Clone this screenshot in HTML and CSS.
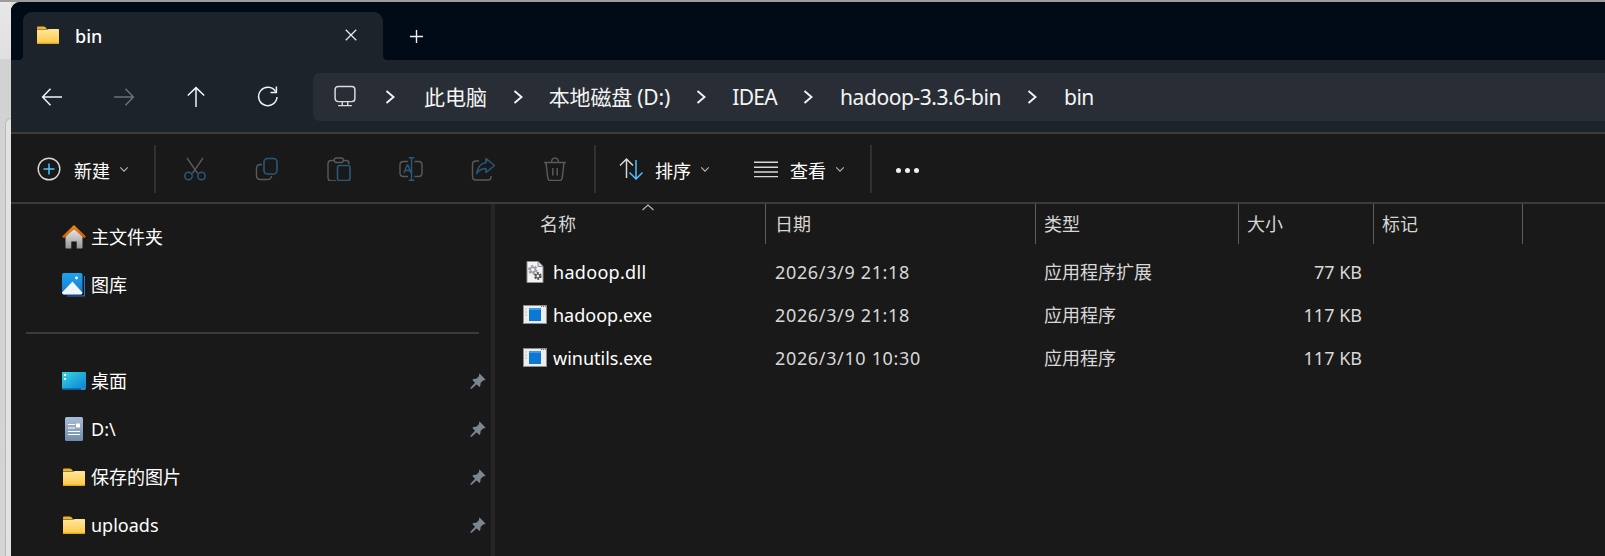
FILE: index.html
```html
<!DOCTYPE html>
<html lang="zh-CN">
<head>
<meta charset="utf-8">
<title>bin</title>
<link rel="stylesheet" href="styles.css">
</head>
<body>
<svg class="defs" aria-hidden="true">
  <defs>
    <linearGradient id="gFolder" x1="0" y1="0" x2="0" y2="1"><stop offset="0" stop-color="#ffe79c"/><stop offset="1" stop-color="#fdc948"/></linearGradient>
    <linearGradient id="gRoof" x1="0" y1="0" x2="0" y2="1"><stop offset="0" stop-color="#f08a1c"/><stop offset="1" stop-color="#c85a04"/></linearGradient>
    <linearGradient id="gHouse" x1="0" y1="0" x2="0" y2="1"><stop offset="0" stop-color="#e6e6e6"/><stop offset="1" stop-color="#969696"/></linearGradient>
    <linearGradient id="gDesk" x1="0" y1="0" x2="1" y2="1"><stop offset="0" stop-color="#35d8e2"/><stop offset="1" stop-color="#0c7fd2"/></linearGradient>
    <linearGradient id="gDoc" x1="0" y1="0" x2="0" y2="1"><stop offset="0" stop-color="#a9bdd8"/><stop offset="1" stop-color="#708cab"/></linearGradient>
    <linearGradient id="gPic" x1="0" y1="0" x2="0" y2="1"><stop offset="0" stop-color="#1fa4ec"/><stop offset="1" stop-color="#1775d0"/></linearGradient>
    <symbol id="folder" viewBox="0 0 24 18">
      <path d="M1 1.600C1 .8 1.600.4 2.200.4h5.600c.6 0 1 .2 1.400.6L11 3H1z" fill="#f6b21c"/>
      <path d="M1 3.600h10.200L13 3h9.400c.4 0 .6.3.6.6v13c0 .5-.3.8-.8.8H1.800c-.5 0-.8-.3-.8-.8z" fill="url(#gFolder)"/>
      <path d="M1 16.800h22v.8c0 .4-.3.8-.8.8H1.800c-.5 0-.8-.4-.8-.8z" fill="#e3a51e"/>
    </symbol>
    <symbol id="pin" viewBox="0 0 16 16">
      <path d="M9.600.6l5.800 5.800-1 1-1-.2-2.800 2.800-.3 2.900-1 1-2.700-2.700-4.900 4.500-1.200.1.1-1.200 4.500-4.900L2.400 7l1-1 2.900-.3L9.100 2.900l-.2-1.100z" fill="#7c868f"/>
    </symbol>
    <symbol id="chev" viewBox="0 0 14 20">
      <path d="M3.500 4l7 6-7 6" fill="none" stroke="#f2f2f2" stroke-width="1.900"/>
    </symbol>
    <symbol id="caret" viewBox="0 0 12 8">
      <path d="M1.500 1.500L6 6l4.500-4.500" fill="none" stroke="#b8b8b8" stroke-width="1.300"/>
    </symbol>
    <symbol id="exe" viewBox="0 0 24 19">
      <rect x="0" y="0" width="24" height="19" fill="#eeeeee"/>
      <rect x=".5" y=".5" width="23" height="18" fill="none" stroke="#8d8d8d"/>
      <rect x="6" y="3" width="12" height="13" fill="#0c78d4"/>
      <rect x="6" y="3" width="12" height="2" fill="#3a9be8"/>
      <path d="M18 1.500h1M20 1.500h1M22 1.500h1" stroke="#777" stroke-width="1"/>
      <path d="M2 4h2M2 7h2M2 10h2" stroke="#bdbdbd" stroke-width="1"/>
    </symbol>
  </defs>
</svg>

<div class="topline"></div>
<div class="desk">
  <div class="behind"><div class="behind-edge"></div></div>
  <main class="window">

    <header class="tabstrip">
      <div class="tab">
        <svg class="ic-folder"><use href="#folder"/></svg>
        <span class="tab-title">bin</span>
        <svg class="tab-close" viewBox="0 0 16 16"><path d="M2 2l12 12M14 2L2 14" stroke="#f0f0f0" stroke-width="1.400" fill="none"/></svg>
      </div>
      <svg class="tab-new" viewBox="0 0 16 16"><path d="M8 1v14M1 8h14" stroke="#f0f0f0" stroke-width="1.500" fill="none"/></svg>
    </header>

    <nav class="navbar">
      <button class="navbtn"><svg viewBox="0 0 24 24" class="navic"><path d="M22 12H3M10.500 3.800L2.600 12l7.900 8.200" fill="none" stroke="#f2f2f2" stroke-width="1.500"/></svg></button>
      <button class="navbtn"><svg viewBox="0 0 24 24" class="navic"><path d="M2 12h19M13.500 3.800l7.900 8.200-7.900 8.200" fill="none" stroke="#6c7075" stroke-width="1.500"/></svg></button>
      <button class="navbtn"><svg viewBox="0 0 24 24" class="navic"><path d="M12 22V3M3.800 10.500L12 2.600l8.200 7.900" fill="none" stroke="#f2f2f2" stroke-width="1.500"/></svg></button>
      <button class="navbtn"><svg viewBox="0 0 24 24" class="navic"><path d="M19.600 6.600A9.200 9.200 0 1 0 21 12" fill="none" stroke="#f2f2f2" stroke-width="1.500"/><path d="M20.400 1.500v5.900h-5.900" fill="none" stroke="#f2f2f2" stroke-width="1.500"/></svg></button>
      <div class="address">
        <svg class="pc" viewBox="0 0 24 24"><rect x="1.200" y="1" width="21.600" height="16.600" rx="3.400" fill="none" stroke="#dcdcdc" stroke-width="1.600"/><path d="M9 18v3.400M15 18v3.400M4.500 22h15" fill="none" stroke="#dcdcdc" stroke-width="1.500"/></svg>
        <svg class="chev"><use href="#chev"/></svg><span class="crumb">此电脑</span>
        <svg class="chev"><use href="#chev"/></svg><span class="crumb crumb-disk">本地磁盘 (D:)</span>
        <svg class="chev"><use href="#chev"/></svg><span class="crumb crumb-idea">IDEA</span>
        <svg class="chev"><use href="#chev"/></svg><span class="crumb crumb-long">hadoop-3.3.6-bin</span>
        <svg class="chev"><use href="#chev"/></svg><span class="crumb crumb-end">bin</span>
      </div>
    </nav>

    <section class="toolbar">
      <div class="menu menu-new">
        <svg class="tic" viewBox="0 0 24 24"><circle cx="12" cy="12" r="10.800" fill="none" stroke="#d8d8d8" stroke-width="1.400"/><path d="M12 6.500v11M6.500 12h11" stroke="#4cc2ff" stroke-width="1.500" fill="none"/></svg>
        <span>新建</span>
        <svg class="caret"><use href="#caret"/></svg>
      </div>
      <div class="tsep tsep-a"></div>
      <div class="icons">
        <div class="iconbtn"><svg viewBox="0 0 24 24" class="tic"><path d="M4 1l10.600 15.400M20 1L9.400 16.400" fill="none" stroke="#5a5a5a" stroke-width="1.400"/><circle cx="5.500" cy="19" r="3.700" fill="none" stroke="#28587a" stroke-width="1.500"/><circle cx="18.500" cy="19" r="3.700" fill="none" stroke="#28587a" stroke-width="1.500"/></svg></div>
        <div class="iconbtn"><svg viewBox="0 0 24 24" class="tic"><path d="M7 7.500H5.600C3 7.500 1.500 9 1.500 11.500v7c0 2.500 1.500 4 4 4h7c2.400 0 3.800-1.300 4-3.500" fill="none" stroke="#5a5a5a" stroke-width="1.400"/><rect x="9" y="1.500" width="13" height="15.500" rx="3.600" fill="none" stroke="#28587a" stroke-width="1.600"/></svg></div>
        <div class="iconbtn"><svg viewBox="0 0 24 24" class="tic"><path d="M7 3.500H4.500C2.500 3.500 1 5 1 7v13.500C1 22.500 2.500 24 4.500 24H9M16.500 3.500H19c2 0 3 1 3 3v.8" fill="none" stroke="#5a5a5a" stroke-width="1.400"/><rect x="7.300" y="1" width="9" height="4.500" rx="2" fill="none" stroke="#5a5a5a" stroke-width="1.400"/><rect x="10.500" y="8.500" width="12.500" height="15" rx="2" fill="none" stroke="#28587a" stroke-width="1.600"/></svg></div>
        <div class="iconbtn"><svg viewBox="0 0 24 24" class="tic"><path d="M9 4.500H4.500C2.500 4.500 1 6 1 8v8c0 2 1.500 3.500 3.500 3.500H9M15.500 4.500H19.500C21.500 4.500 23 6 23 8v8c0 2-1.500 3.500-3.500 3.500h-4" fill="none" stroke="#5a5a5a" stroke-width="1.400"/><path d="M5 16L8.200 8h.6L12 16M6.200 13.500h4.600M12.500.8v22.400M9.700.8h5.600M9.700 23.200h5.600" fill="none" stroke="#28587a" stroke-width="1.500"/></svg></div>
        <div class="iconbtn"><svg viewBox="0 0 24 24" class="tic"><path d="M8 4H5C3 4 1.500 5.500 1.500 7.500v12C1.500 21.500 3 23 5 23h12c2 0 3-1.500 3-3v-1" fill="none" stroke="#5a5a5a" stroke-width="1.400"/><path d="M15 1.500L23.500 8.500 15 15.500V11.500C11 11.500 8 13 5.800 16.500 6.500 10.500 10 6 15 5.500z" fill="none" stroke="#28587a" stroke-width="1.600" stroke-linejoin="round"/></svg></div>
        <div class="iconbtn"><svg viewBox="0 0 24 24" class="tic"><path d="M1 5.500h22M3 5.500l1.800 15.500c.2 1.500 1.200 2.500 2.700 2.500h9c1.500 0 2.500-1 2.700-2.500L21 5.500M8.500 5.500C8.500 3 10 1 12 1s3.500 2 3.500 4.500M9.800 11v7.500M14.200 11v7.500" fill="none" stroke="#5a5a5a" stroke-width="1.500"/></svg></div>
      </div>
      <div class="tsep"></div>
      <div class="menu menu-sort">
        <svg class="tic" viewBox="0 0 24 24"><path d="M7.500 21V2M1 8.500L7.500 2 14 8.500" fill="none" stroke="#d8d8d8" stroke-width="1.500"/><path d="M17 3v19M10.500 15.500L17 22l6.500-6.500" fill="none" stroke="#4cc2ff" stroke-width="1.500"/></svg>
        <span>排序</span>
        <svg class="caret"><use href="#caret"/></svg>
      </div>
      <div class="menu menu-view">
        <svg class="tic" viewBox="0 0 24 24"><path d="M0 5.300h24M0 10.200h24M0 15h24M0 19.600h24" fill="none" stroke="#d8d8d8" stroke-width="1.400"/></svg>
        <span>查看</span>
        <svg class="caret"><use href="#caret"/></svg>
      </div>
      <div class="tsep tsep-c"></div>
      <div class="more"><i></i><i></i><i></i></div>
    </section>

    <section class="body">
      <aside class="sidebar">
        <div class="side-row">
          <svg class="sic" viewBox="0 0 24 24"><path d="M3.500 11L12 4l8.500 7v11.500c0 .6-.4 1-1 1h-4.800v-7H9.300v7H4.500c-.6 0-1-.4-1-1z" fill="url(#gHouse)"/><path d="M0 11.500L12 0l12 11.500-2 1.800L12 4 2 13.300z" fill="url(#gRoof)"/></svg>
          <span>主文件夹</span>
        </div>
        <div class="side-row">
          <svg class="sic" viewBox="0 0 24 24"><path d="M23 3v19.500c0 .6-.4 1-1 1H5v-1h16c.6 0 1-.4 1-1V3z" fill="#2f74c4"/><rect x="0" y="0" width="20.500" height="21.500" rx="2" fill="url(#gPic)"/><path d="M0 19.500L10.500 8.500l9.800 11V20c0 .8-.6 1.500-1.500 1.500H2c-1.200 0-2-.8-2-2z" fill="#eef6ff"/><circle cx="14.500" cy="5" r="1.400" fill="#fff"/></svg>
          <span>图库</span>
        </div>
        <div class="side-div"></div>
        <div class="side-row">
          <svg class="sic" viewBox="0 0 24 24"><rect x="0" y="3" width="24" height="17.500" rx=".8" fill="url(#gDesk)"/><rect x="0" y="19.300" width="24" height="1.200" fill="#0b5ea8"/><rect x="2" y="5" width="2" height="2" fill="#fff"/><rect x="2" y="9" width="2" height="2" fill="#fff"/><rect x="19.500" y="19.500" width="1" height="1" fill="#cfe"/><rect x="21.500" y="19.500" width="1" height="1" fill="#cfe"/></svg>
          <span>桌面</span>
          <svg class="pin"><use href="#pin"/></svg>
        </div>
        <div class="side-row">
          <svg class="sic" viewBox="0 0 24 24"><rect x="3" y="0" width="18" height="24" rx="1.500" fill="url(#gDoc)"/><path d="M6 7.500h7M6 11h7M6 14.500h12M6 17.500h12" stroke="#fff" stroke-width="1.100" fill="none"/><rect x="14" y="6.500" width="4" height="4" fill="#fff"/></svg>
          <span>D:\</span>
          <svg class="pin"><use href="#pin"/></svg>
        </div>
        <div class="side-row">
          <svg class="sic sic-folder"><use href="#folder"/></svg>
          <span>保存的图片</span>
          <svg class="pin"><use href="#pin"/></svg>
        </div>
        <div class="side-row">
          <svg class="sic sic-folder"><use href="#folder"/></svg>
          <span>uploads</span>
          <svg class="pin"><use href="#pin"/></svg>
        </div>
      </aside>

      <div class="files">
        <div class="cols cols-head">
          <div class="hcell hname">名称<svg class="sortcaret" viewBox="0 0 14 7"><path d="M1.500 6L7 1l5.500 5" fill="none" stroke="#b5b5b5" stroke-width="1.200"/></svg></div>
          <div class="hcell">日期</div>
          <div class="hcell">类型</div>
          <div class="hcell">大小</div>
          <div class="hcell">标记</div>
        </div>
        <div class="rows">
          <div class="cols row">
            <div class="cname">
              <svg class="fic fic-dll" viewBox="0 0 24 22"><path d="M4 .5h11l5 5v16H4z" fill="#f3f3f3" stroke="#8e8e8e"/><path d="M15 .5v5h5" fill="#dcdcdc" stroke="#8e8e8e"/><circle cx="9.800" cy="8.800" r="3.400" fill="none" stroke="#9aa0a6" stroke-width="2.800" stroke-dasharray="2 1.500"/><circle cx="9.800" cy="8.800" r="2.500" fill="none" stroke="#9aa0a6" stroke-width="1.400"/><circle cx="14.800" cy="15" r="2.700" fill="none" stroke="#555" stroke-width="2.400" stroke-dasharray="1.700 1.200"/><circle cx="14.800" cy="15" r="2" fill="none" stroke="#555" stroke-width="1.200"/></svg>
              <span class="fname-dll">hadoop.dll</span>
            </div>
            <div class="cell cdate">2026/3/9 21:18</div>
            <div class="cell ctype">应用程序扩展</div>
            <div class="cell csize">77 KB</div>
            <div class="cell"></div>
          </div>
          <div class="cols row">
            <div class="cname"><svg class="fic"><use href="#exe"/></svg><span>hadoop.exe</span></div>
            <div class="cell cdate">2026/3/9 21:18</div>
            <div class="cell ctype">应用程序</div>
            <div class="cell csize">117 KB</div>
            <div class="cell"></div>
          </div>
          <div class="cols row">
            <div class="cname"><svg class="fic"><use href="#exe"/></svg><span>winutils.exe</span></div>
            <div class="cell cdate">2026/3/10 10:30</div>
            <div class="cell ctype">应用程序</div>
            <div class="cell csize">117 KB</div>
            <div class="cell"></div>
          </div>
        </div>
      </div>
    </section>
  </main>
</div>
</body>
</html>
```
FILE: styles.css
```css
* { box-sizing: border-box; }
html, body { margin: 0; height: 100%; }
body {
  width: 1605px;
  height: 556px;
  overflow: hidden;
  display: flex;
  flex-direction: column;
  background: #dcdcdc;
  color: #fff;
  font-family: "Noto Sans", "Noto Sans CJK SC", sans-serif;
  font-size: 18px;
}
.defs { position: absolute; width: 0; height: 0; }
svg { display: block; flex: none; }
.topline { height: 2px; background: #9c9c9c; flex: none; }
.desk { flex: 1; display: flex; min-height: 0; }
.behind {
  width: 11px;
  flex: none;
  background: linear-gradient(to bottom, #e8e8e8 0, #e0e0e0 56px, #d2d2d2 58px, #d4d4d4 100%);
  padding: 116px 0 0 5px;
}
.behind-edge {
  height: 100%;
  border-left: 1px solid #b9b9b9;
  border-top: 1px solid #b9b9b9;
  border-top-left-radius: 6px;
  background: #e2e2e2;
}
.window {
  flex: 1;
  min-width: 0;
  display: flex;
  flex-direction: column;
  border-top-left-radius: 9px;
  overflow: hidden;
  background: #191919;
}

/* tabs */
.tabstrip {
  height: 58px;
  flex: none;
  display: flex;
  align-items: flex-end;
  padding-left: 12px;
  background: #000b17;
}
.tab {
  position: relative;
  width: 360px;
  height: 48px;
  display: flex;
  align-items: center;
  padding: 0 25px 1px 13px;
  background: #1c232b;
  border-radius: 9px 9px 0 0;
}
.tab::before, .tab::after {
  content: "";
  position: absolute;
  bottom: 0;
  width: 5px;
  height: 5px;
}
.tab::before { left: -5px; background: radial-gradient(circle at 0 0, transparent 5px, #1c232b 5.500px); }
.tab::after { right: -5px; background: radial-gradient(circle at 100% 0, transparent 5px, #1c232b 5.500px); }
.ic-folder { width: 24px; height: 18px; margin-bottom: 2px; }
.tab-title { margin-left: 15px; font-weight: 500; flex: 1; line-height: 24px; }
.tab-close { width: 14px; height: 14px; margin-bottom: 1px; }
.tab-new { width: 15px; height: 15px; margin: 0 0 16px 26px; }

/* nav */
.navbar {
  height: 72px;
  flex: none;
  display: flex;
  align-items: center;
  padding: 2px 0 0 5px;
  background: #1c232b;
}
.navbtn {
  width: 72px;
  height: 48px;
  padding: 0;
  border: 0;
  background: none;
  display: flex;
  align-items: center;
  justify-content: center;
}
.navic { width: 24px; height: 24px; }
.address {
  flex: 1;
  margin-left: 9px;
  height: 48px;
  padding-left: 21px;
  display: grid;
  grid-template-columns: 25px 14px 66px 14px 121px 14px 45px 14px 162px 14px auto;
  column-gap: 24px;
  align-items: center;
  background: #292e36;
  border-radius: 7px 0 0 7px;
  font-size: 21px;
  color: #f4f4f4;
}
.pc { width: 22px; height: 23px; margin-top: -1px; }
.chev { width: 14px; height: 20px; }
.crumb { white-space: nowrap; line-height: 30px; justify-self: end; }
.crumb-disk { letter-spacing: -0.2px; }
.crumb-idea { letter-spacing: -0.7px; }
.crumb-long { letter-spacing: -0.45px; }
.crumb-end { justify-self: start; margin-left: 1px; letter-spacing: -0.5px; }

/* toolbar */
.toolbar {
  height: 72px;
  flex: none;
  display: flex;
  align-items: center;
  padding: 2px 0 0 26px;
  background: #191919;
  border-top: 2px solid #3b3b3b;
  border-bottom: 2px solid #3b3b3b;
}
.tic { width: 24px; height: 24px; }
.menu { display: flex; align-items: center; line-height: 24px; }
.menu span { width: 36px; margin: 0 9px 0 12px; padding-top: 3px; white-space: nowrap; }
.menu-new span { margin-left: 13px; }
.caret { width: 10px; height: 7px; }
.tsep { width: 2px; height: 48px; background: #303030; flex: none; }
.tsep-a { margin-left: 25px; }
.icons { display: flex; margin: 0 3px; }
.iconbtn { width: 72px; display: flex; justify-content: center; }
.menu-sort { margin-left: 23px; }
.menu-view { margin-left: 44px; }
.tsep-c { margin-left: 25px; }
.more { display: flex; gap: 4px; margin: 3px 0 0 24px; }
.more i { width: 5px; height: 5px; border-radius: 50%; background: #f0f0f0; }

/* body */
.body { flex: 1; min-height: 0; display: flex; }
.sidebar {
  width: 484px;
  flex: none;
  padding: 9px 5px 0 0;
  border-right: 4px solid #262626;
}
.side-row {
  height: 48px;
  display: flex;
  align-items: center;
  padding-left: 51px;
  line-height: 24px;
}
.sic { width: 24px; height: 24px; margin-right: 5px; }
.sic-folder { height: 18px; }
.pin { width: 16px; height: 16px; margin-left: auto; }
.side-div { height: 2px; margin: 23px 7px 23px 15px; background: #3a3a3a; }

.files { flex: 1; min-width: 0; }
.cols {
  display: grid;
  grid-template-columns: 271px 270px 203px 135px 149px;
}
.cols-head { height: 40px; color: #d6d6d6; }
.hcell {
  position: relative;
  display: flex;
  align-items: center;
  padding-left: 8px;
  border-right: 1px solid #5e5e5e;
  line-height: 24px;
}
.hname { padding-left: 45px; }
.hname + .hcell { padding-left: 9px; }
.sortcaret { position: absolute; left: 146px; top: 0; width: 14px; height: 7px; }
.rows { margin-top: 6px; }
.row { height: 43px; align-items: center; color: #d8d8d8; line-height: 24px; }
.cname { display: flex; align-items: center; padding-left: 28px; color: #fff; }
.fic { width: 24px; height: 19px; margin-right: 6px; }
.fic-dll { height: 22px; }
.fname-dll { letter-spacing: .3px; }
.cell { padding-left: 9px; white-space: nowrap; }
.cdate { letter-spacing: .65px; }
.ctype { padding-left: 8px; }
.csize { text-align: right; padding-right: 12px; }
```
